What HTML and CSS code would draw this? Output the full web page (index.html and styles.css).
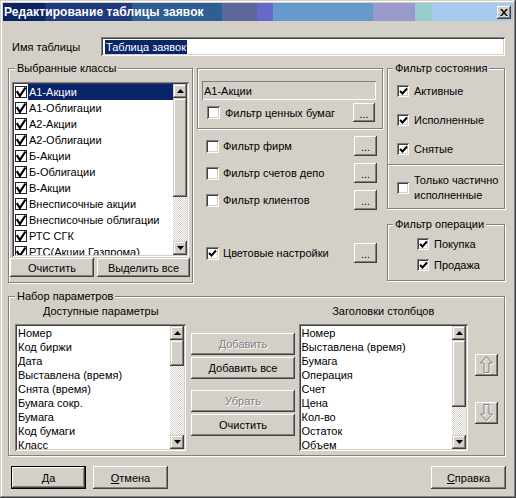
FILE: index.html
```html
<!DOCTYPE html>
<html lang="ru">
<head>
<meta charset="utf-8">
<title>Редактирование таблицы заявок</title>
<link rel="stylesheet" href="styles.css">
</head>
<body>
<div class="window">
  <div class="titlebar">
    <span class="title">Редактирование таблицы заявок</span>
    <span class="close-btn"><svg width="8" height="7" viewBox="0 0 8 7"><path d="M0 0h2l2 2.5L6 0h2L5 3.5 8 7H6L4 4.5 2 7H0l3-3.5z" fill="#000"/></svg></span>
  </div>

  <div class="name-row">
    <span class="name-label">Имя таблицы</span>
    <div class="field name-input"><span class="sel-text">Таблица заявок</span></div>
  </div>

  <div class="main-row">
    <fieldset class="group g-classes">
      <legend>Выбранные классы</legend>
      <div class="listbox lb-classes">
        <div class="list-items">
          <div class="citem selected"><span class="lcheck"><svg width="12" height="12" viewBox="0 0 12 12"><rect x="0.5" y="0.5" width="11" height="11" fill="#fff" stroke="#222"/><path d="M1.8 5.2 L4.8 10 L10.5 1.5" fill="none" stroke="#000" stroke-width="2.2"/></svg></span><span class="ctext">А1-Акции</span></div>
          <div class="citem"><span class="lcheck"><svg width="12" height="12" viewBox="0 0 12 12"><rect x="0.5" y="0.5" width="11" height="11" fill="#fff" stroke="#222"/><path d="M1.8 5.2 L4.8 10 L10.5 1.5" fill="none" stroke="#000" stroke-width="2.2"/></svg></span><span class="ctext">А1-Облигации</span></div>
          <div class="citem"><span class="lcheck"><svg width="12" height="12" viewBox="0 0 12 12"><rect x="0.5" y="0.5" width="11" height="11" fill="#fff" stroke="#222"/><path d="M1.8 5.2 L4.8 10 L10.5 1.5" fill="none" stroke="#000" stroke-width="2.2"/></svg></span><span class="ctext">А2-Акции</span></div>
          <div class="citem"><span class="lcheck"><svg width="12" height="12" viewBox="0 0 12 12"><rect x="0.5" y="0.5" width="11" height="11" fill="#fff" stroke="#222"/><path d="M1.8 5.2 L4.8 10 L10.5 1.5" fill="none" stroke="#000" stroke-width="2.2"/></svg></span><span class="ctext">А2-Облигации</span></div>
          <div class="citem"><span class="lcheck"><svg width="12" height="12" viewBox="0 0 12 12"><rect x="0.5" y="0.5" width="11" height="11" fill="#fff" stroke="#222"/><path d="M1.8 5.2 L4.8 10 L10.5 1.5" fill="none" stroke="#000" stroke-width="2.2"/></svg></span><span class="ctext">Б-Акции</span></div>
          <div class="citem"><span class="lcheck"><svg width="12" height="12" viewBox="0 0 12 12"><rect x="0.5" y="0.5" width="11" height="11" fill="#fff" stroke="#222"/><path d="M1.8 5.2 L4.8 10 L10.5 1.5" fill="none" stroke="#000" stroke-width="2.2"/></svg></span><span class="ctext">Б-Облигации</span></div>
          <div class="citem"><span class="lcheck"><svg width="12" height="12" viewBox="0 0 12 12"><rect x="0.5" y="0.5" width="11" height="11" fill="#fff" stroke="#222"/><path d="M1.8 5.2 L4.8 10 L10.5 1.5" fill="none" stroke="#000" stroke-width="2.2"/></svg></span><span class="ctext">В-Акции</span></div>
          <div class="citem"><span class="lcheck"><svg width="12" height="12" viewBox="0 0 12 12"><rect x="0.5" y="0.5" width="11" height="11" fill="#fff" stroke="#222"/><path d="M1.8 5.2 L4.8 10 L10.5 1.5" fill="none" stroke="#000" stroke-width="2.2"/></svg></span><span class="ctext">Внесписочные акции</span></div>
          <div class="citem"><span class="lcheck"><svg width="12" height="12" viewBox="0 0 12 12"><rect x="0.5" y="0.5" width="11" height="11" fill="#fff" stroke="#222"/><path d="M1.8 5.2 L4.8 10 L10.5 1.5" fill="none" stroke="#000" stroke-width="2.2"/></svg></span><span class="ctext">Внесписочные облигации</span></div>
          <div class="citem"><span class="lcheck"><svg width="12" height="12" viewBox="0 0 12 12"><rect x="0.5" y="0.5" width="11" height="11" fill="#fff" stroke="#222"/><path d="M1.8 5.2 L4.8 10 L10.5 1.5" fill="none" stroke="#000" stroke-width="2.2"/></svg></span><span class="ctext">РТС СГК</span></div>
          <div class="citem"><span class="lcheck"><svg width="12" height="12" viewBox="0 0 12 12"><rect x="0.5" y="0.5" width="11" height="11" fill="#fff" stroke="#222"/><path d="M1.8 5.2 L4.8 10 L10.5 1.5" fill="none" stroke="#000" stroke-width="2.2"/></svg></span><span class="ctext">РТС(Акции Газпрома)</span></div>
        </div>
        <div class="scrollbar">
          <div class="sb-btn"><svg width="7" height="4" viewBox="0 0 7 4"><path d="M0 4h7L3.5 0z" fill="#000"/></svg></div>
          <div class="sb-thumb thumb-classes"></div>
          <div class="sb-track"></div>
          <div class="sb-btn"><svg width="7" height="4" viewBox="0 0 7 4"><path d="M0 0h7L3.5 4z" fill="#000"/></svg></div>
        </div>
      </div>
      <div class="btn-row">
        <button class="btn btn-clear">Очистить</button>
        <button class="btn btn-all">Выделить все</button>
      </div>
    </fieldset>

    <div class="col-mid">
      <fieldset class="group g-sec">
        <div class="readonly">А1-Акции</div>
        <div class="sec-row">
          <span class="cb"></span>
          <span class="cb-label">Фильтр ценных бумаг</span>
          <button class="btn btn-dots">...</button>
        </div>
      </fieldset>
      <div class="filter-row">
        <span class="cb"></span>
        <span class="cb-label">Фильтр фирм</span>
        <button class="btn btn-dots">...</button>
      </div>
      <div class="filter-row">
        <span class="cb"></span>
        <span class="cb-label">Фильтр счетов депо</span>
        <button class="btn btn-dots">...</button>
      </div>
      <div class="filter-row">
        <span class="cb"></span>
        <span class="cb-label">Фильтр клиентов</span>
        <button class="btn btn-dots">...</button>
      </div>
      <div class="filter-row color-row">
        <span class="cb checked"><svg width="9" height="9" viewBox="0 0 9 9"><path d="M1 4 L3.5 6.5 L8 1.5" fill="none" stroke="#000" stroke-width="2"/></svg></span>
        <span class="cb-label">Цветовые настройки</span>
        <button class="btn btn-dots">...</button>
      </div>
    </div>

    <div class="col-right">
      <fieldset class="group g-state">
        <legend>Фильтр состояния</legend>
        <div class="st-row"><span class="cb cb-sm checked"><svg width="9" height="9" viewBox="0 0 9 9"><path d="M1 4 L3.5 6.5 L8 1.5" fill="none" stroke="#000" stroke-width="2"/></svg></span><span class="cb-label">Активные</span></div>
        <div class="st-row"><span class="cb cb-sm checked"><svg width="9" height="9" viewBox="0 0 9 9"><path d="M1 4 L3.5 6.5 L8 1.5" fill="none" stroke="#000" stroke-width="2"/></svg></span><span class="cb-label">Исполненные</span></div>
        <div class="st-row"><span class="cb cb-sm checked"><svg width="9" height="9" viewBox="0 0 9 9"><path d="M1 4 L3.5 6.5 L8 1.5" fill="none" stroke="#000" stroke-width="2"/></svg></span><span class="cb-label">Снятые</span></div>
        <div class="separator"></div>
        <div class="st-row partial-row"><span class="cb cb-sm"></span><span class="cb-label">Только частично<br>исполненные</span></div>
      </fieldset>
      <fieldset class="group g-oper">
        <legend>Фильтр операции</legend>
        <div class="op-row"><span class="cb cb-sm checked"><svg width="9" height="9" viewBox="0 0 9 9"><path d="M1 4 L3.5 6.5 L8 1.5" fill="none" stroke="#000" stroke-width="2"/></svg></span><span class="cb-label">Покупка</span></div>
        <div class="op-row"><span class="cb cb-sm checked"><svg width="9" height="9" viewBox="0 0 9 9"><path d="M1 4 L3.5 6.5 L8 1.5" fill="none" stroke="#000" stroke-width="2"/></svg></span><span class="cb-label">Продажа</span></div>
      </fieldset>
    </div>
  </div>

  <fieldset class="group g-params">
    <legend>Набор параметров</legend>
    <div class="params-body">
      <div class="pcol pcol-left">
        <div class="ptitle">Доступные параметры</div>
        <div class="listbox lb-params">
          <div class="list-items">
            <div class="pitem">Номер</div>
            <div class="pitem">Код биржи</div>
            <div class="pitem">Дата</div>
            <div class="pitem">Выставлена (время)</div>
            <div class="pitem">Снята (время)</div>
            <div class="pitem">Бумага сокр.</div>
            <div class="pitem">Бумага</div>
            <div class="pitem">Код бумаги</div>
            <div class="pitem">Класс</div>
          </div>
          <div class="scrollbar">
            <div class="sb-btn"><svg width="7" height="4" viewBox="0 0 7 4"><path d="M0 4h7L3.5 0z" fill="#000"/></svg></div>
            <div class="sb-thumb thumb-avail"></div>
            <div class="sb-track"></div>
            <div class="sb-btn"><svg width="7" height="4" viewBox="0 0 7 4"><path d="M0 0h7L3.5 4z" fill="#000"/></svg></div>
          </div>
        </div>
      </div>

      <div class="pbtns">
        <button class="btn pbtn disabled">Добавить</button>
        <button class="btn pbtn">Добавить все</button>
        <button class="btn pbtn disabled gap-top">Убрать</button>
        <button class="btn pbtn">Очистить</button>
      </div>

      <div class="pcol pcol-right">
        <div class="ptitle">Заголовки столбцов</div>
        <div class="listbox lb-params">
          <div class="list-items">
            <div class="pitem">Номер</div>
            <div class="pitem">Выставлена (время)</div>
            <div class="pitem">Бумага</div>
            <div class="pitem">Операция</div>
            <div class="pitem">Счет</div>
            <div class="pitem">Цена</div>
            <div class="pitem">Кол-во</div>
            <div class="pitem">Остаток</div>
            <div class="pitem">Объем</div>
          </div>
          <div class="scrollbar">
            <div class="sb-btn"><svg width="7" height="4" viewBox="0 0 7 4"><path d="M0 4h7L3.5 0z" fill="#000"/></svg></div>
            <div class="sb-thumb thumb-cols"></div>
            <div class="sb-track"></div>
            <div class="sb-btn"><svg width="7" height="4" viewBox="0 0 7 4"><path d="M0 0h7L3.5 4z" fill="#000"/></svg></div>
          </div>
        </div>
      </div>

      <div class="arrows">
        <button class="btn arrow-btn"><svg width="14" height="18" viewBox="0 0 14 18"><path d="M7.5 1.5 L13.5 8 L10 8 L10 17.5 L5 17.5 L5 8 L1.5 8 Z" fill="none" stroke="#fff"/><path d="M6.5 0.5 L12.5 7 L9 7 L9 16.5 L4 16.5 L4 7 L0.5 7 Z" fill="none" stroke="#808080"/></svg></button>
        <button class="btn arrow-btn"><svg width="14" height="18" viewBox="0 0 14 18"><path d="M7.5 17.5 L13.5 11 L10 11 L10 1.5 L5 1.5 L5 11 L1.5 11 Z" fill="none" stroke="#fff"/><path d="M6.5 16.5 L12.5 10 L9 10 L9 0.5 L4 0.5 L4 10 L0.5 10 Z" fill="none" stroke="#808080"/></svg></button>
      </div>
    </div>
  </fieldset>

  <div class="bottom-row">
    <button class="btn dlg-btn default-btn"><u>Д</u>а</button>
    <button class="btn dlg-btn"><u>О</u>тмена</button>
    <button class="btn dlg-btn help-btn"><u>С</u>правка</button>
  </div>
</div>
</body>
</html>
```

FILE: styles.css
```css
* { box-sizing: border-box; }
html, body { margin: 0; padding: 0; }
body {
  background: #d4d0c8;
  font-family: "Liberation Sans", Arial, sans-serif;
  font-size: 11px;
  color: #000;
}

.window {
  width: 516px;
  height: 498px;
  padding: 3px;
  background: #d4d0c8;
  box-shadow: inset -1px -1px #404040, inset 1px 1px #d4d0c8, inset -2px -2px #808080, inset 2px 2px #fff;
  display: flex;
  flex-direction: column;
}

/* ---------- title bar ---------- */
.titlebar {
  height: 18px;
  flex: none;
  display: flex;
  align-items: center;
  padding-left: 1px;
  background: linear-gradient(to right,
    #0b2463 0 42px, #1f3a7c 42px 129px, #2e5e93 129px 219px,
    #5b6899 219px 254px, #6868c9 254px 270px, #6699cc 270px 370px,
    #9999cc 370px 412px, #99cccc 412px 429px, #a6caf0 429px 510px);
}
.title {
  color: #fff;
  font-weight: bold;
  font-size: 12px;
  letter-spacing: 0.1px;
  flex: 1;
}
.close-btn {
  width: 14px;
  height: 13px;
  margin-right: 2px;
  background: #d4d0c8;
  box-shadow: inset -1px -1px #404040, inset 1px 1px #fff, inset -2px -2px #808080;
  display: flex;
  align-items: center;
  justify-content: center;
}

/* ---------- shared controls ---------- */
.btn {
  font: inherit;
  color: #000;
  background: #d4d0c8;
  border: none;
  padding: 0;
  margin: 0;
  box-shadow: inset -1px -1px #404040, inset 1px 1px #fff, inset -2px -2px #808080, inset 2px 2px #d4d0c8;
  display: flex;
  align-items: center;
  justify-content: center;
}
.btn.disabled {
  color: #808080;
  text-shadow: 1px 1px #fff;
}

.field {
  background: #fff;
  box-shadow: inset 1px 1px #808080, inset -1px -1px #fff, inset 2px 2px #404040, inset -2px -2px #d4d0c8;
}

.group {
  margin: 0;
  min-width: 0;
  border: 1px solid #808080;
  box-shadow: inset 1px 1px #fff, 1px 1px #fff;
}
.group legend {
  padding: 0 2px;
  line-height: 14px;
  background: #d4d0c8;
}

.cb {
  width: 13px;
  height: 13px;
  flex: none;
  background: #fff;
  box-shadow: inset 1px 1px #808080, inset -1px -1px #fff, inset 2px 2px #404040, inset -2px -2px #d4d0c8;
  display: flex;
  align-items: center;
  justify-content: center;
}
.cb-sm { width: 12px; height: 12px; }
.cb-label { margin-left: 5px; white-space: nowrap; }

.listbox {
  display: flex;
  background: #fff;
  padding: 2px;
  box-shadow: inset 1px 1px #808080, inset -1px -1px #fff, inset 2px 2px #404040, inset -2px -2px #d4d0c8;
}
.list-items {
  flex: 1;
  overflow: hidden;
  min-width: 0;
}
.scrollbar {
  width: 14px;
  flex: none;
  display: flex;
  flex-direction: column;
}
.sb-btn, .sb-thumb {
  background: #d4d0c8;
  box-shadow: inset -1px -1px #404040, inset 1px 1px #d4d0c8, inset -2px -2px #808080, inset 2px 2px #fff;
}
.sb-btn {
  height: 14px;
  flex: none;
  display: flex;
  align-items: center;
  justify-content: center;
}
.sb-thumb { flex: none; }
.sb-track {
  flex: 1;
  background: repeating-conic-gradient(#fff 0 25%, #d4d0c8 0 50%) 0 0 / 2px 2px;
}
.thumb-classes { height: 99px; }
.thumb-avail { height: 26px; }
.thumb-cols { height: 67px; }

/* ---------- name row ---------- */
.name-row {
  margin-top: 16px;
  height: 19px;
  flex: none;
  display: flex;
  align-items: center;
}
.name-label {
  margin-left: 9px;
  width: 89px;
}
.name-input {
  width: 404px;
  height: 19px;
  display: flex;
  align-items: center;
  padding-left: 4px;
}
.sel-text {
  background: #0a246a;
  color: #fff;
  line-height: 14px;
  padding: 0 1px;
}

/* ---------- main row ---------- */
.main-row {
  margin-top: 5px;
  display: flex;
  align-items: flex-start;
  padding-left: 5px;
  flex: none;
}

.g-classes {
  width: 185px;
  padding: 7px 3px 5px 3px;
}
.g-classes legend { margin-left: 3px; }
.lb-classes { height: 175px; }
.citem {
  height: 16px;
  display: flex;
  align-items: center;
  white-space: nowrap;
}
.lcheck {
  width: 12px;
  height: 12px;
  margin-left: 1px;
  flex: none;
  display: flex;
}
.ctext {
  margin-left: 1px;
  padding-left: 1px;
  line-height: 16px;
  flex: 1;
}
.citem.selected .ctext {
  background: #0a246a;
  color: #fff;
}
.btn-row {
  display: flex;
  gap: 3px;
  margin: 1px -1px 0 -2px;
}
.btn-row .btn { height: 19px; }
.btn-clear { width: 84px; }
.btn-all { width: 93px; }

.col-mid {
  width: 186px;
  margin-left: 4px;
  display: flex;
  flex-direction: column;
}
.g-sec {
  margin-top: 7px;
  padding: 12px 6px 6px 4px;
}
.readonly {
  height: 19px;
  background: #d4d0c8;
  box-shadow: inset 1px 1px #808080, inset -1px -1px #fff;
  display: flex;
  align-items: center;
  padding-left: 2px;
}
.sec-row {
  margin-top: 3px;
  height: 19px;
  display: flex;
  align-items: center;
  padding-left: 5px;
  padding-right: 1px;
}
.btn-dots {
  margin-left: auto;
  width: 22px;
  height: 19px;
  padding-top: 2px;
}
.filter-row {
  margin-top: 7px;
  height: 20px;
  display: flex;
  align-items: center;
  padding-left: 9px;
  padding-right: 6px;
}
.filter-row .cb-label { margin-left: 4px; }
.filter-row .btn-dots { width: 23px; height: 20px; }
.color-row { margin-top: 33px; }

.col-right {
  width: 118px;
  margin-left: 4px;
  display: flex;
  flex-direction: column;
}
.g-state {
  padding: 8px 4px 5px 4px;
}
.g-state legend, .g-oper legend { margin-left: 1px; }
.st-row {
  height: 16px;
  display: flex;
  align-items: center;
  padding-left: 5px;
}
.st-row + .st-row { margin-top: 13px; }
.separator {
  margin: 7px -3px 0 -4px;
  height: 2px;
  border-top: 1px solid #808080;
  border-bottom: 1px solid #fff;
}
.st-row.partial-row {
  margin-top: 7px;
  height: 30px;
  line-height: 15px;
}
.g-oper {
  margin-top: 8px;
  padding: 5px 4px 7px 4px;
}
.op-row {
  height: 16px;
  display: flex;
  align-items: center;
  padding-left: 25px;
}
.op-row + .op-row { margin-top: 5px; }

/* ---------- parameters ---------- */
.g-params {
  margin: 6px 0 0 5px;
  width: 497px;
  padding: 1px 6px 4px 6px;
  flex: none;
}
.params-body {
  display: flex;
  align-items: flex-start;
}
.pcol { display: flex; flex-direction: column; }
.pcol-left { width: 173px; }
.pcol-right { width: 171px; margin-left: 4px; }
.ptitle {
  height: 20px;
  line-height: 14px;
  text-align: center;
  white-space: nowrap;
}
.lb-params { height: 127px; }
.pitem {
  height: 14px;
  line-height: 14px;
  padding-left: 1px;
  white-space: nowrap;
}
.pbtns {
  width: 104px;
  margin-left: 5px;
  padding-top: 29px;
  display: flex;
  flex-direction: column;
  gap: 2px;
}
.pbtn { height: 22px; }
.pbtn.gap-top { margin-top: 9px; }
.arrows {
  margin-left: 7px;
  padding-top: 50px;
  display: flex;
  flex-direction: column;
  gap: 26px;
}
.arrow-btn {
  width: 23px;
  height: 22px;
}

/* ---------- bottom buttons ---------- */
.bottom-row {
  margin-top: 10px;
  padding: 0 7px 0 8px;
  display: flex;
  gap: 7px;
}
.dlg-btn {
  width: 75px;
  height: 23px;
}
.default-btn {
  box-shadow: inset 0 0 0 1px #000, inset -2px -2px #404040, inset 2px 2px #fff, inset -3px -3px #808080;
}
.help-btn { margin-left: auto; }
.dlg-btn u { text-decoration: underline; }
```
